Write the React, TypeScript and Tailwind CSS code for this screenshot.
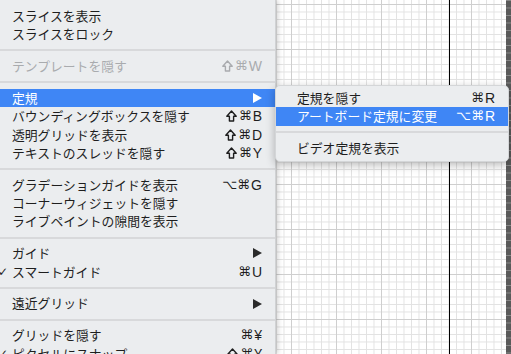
import React from "react";

type Item =
  | "sep"
  | { t: string; k?: string; sub?: boolean; active?: boolean; disabled?: boolean; checked?: boolean };

const menuItems: Item[] = [
  { t: "スライスを表示" },
  { t: "スライスをロック" },
  "sep",
  { t: "テンプレートを隠す", k: "⇧⌘W", disabled: true },
  "sep",
  { t: "定規", sub: true, active: true },
  { t: "バウンディングボックスを隠す", k: "⇧⌘B" },
  { t: "透明グリッドを表示", k: "⇧⌘D" },
  { t: "テキストのスレッドを隠す", k: "⇧⌘Y" },
  "sep",
  { t: "グラデーションガイドを表示", k: "⌥⌘G" },
  { t: "コーナーウィジェットを隠す" },
  { t: "ライブペイントの隙間を表示" },
  "sep",
  { t: "ガイド", sub: true },
  { t: "スマートガイド", k: "⌘U", checked: true },
  "sep",
  { t: "遠近グリッド", sub: true },
  "sep",
  { t: "グリッドを隠す", k: "⌘¥" },
  { t: "ピクセルにスナップ", k: "⇧⌘¥", checked: true },
];

const subItems: Item[] = [
  { t: "定規を隠す", k: "⌘R" },
  { t: "アートボード定規に変更", k: "⌥⌘R", active: true },
  "sep",
  { t: "ビデオ定規を表示" },
];

function Arrow({ active }: { active?: boolean }) {
  return (
    <svg width="9" height="10" viewBox="0 0 9 10" className="shrink-0">
      <path d="M0 0 L9 5 L0 10 Z" fill={active ? "#ffffff" : "#2a2a2a"} />
    </svg>
  );
}

// outlined shift arrow, the DejaVu glyph is too thin next to the mac one
function ShiftIcon() {
  return (
    <svg width="11" height="12" viewBox="0 0 11 12" className="shrink-0 mr-[2px]">
      <path
        d="M5.5 1 L10.2 6.2 H7.6 V11 H3.4 V6.2 H0.8 Z"
        fill="none"
        stroke="currentColor"
        strokeWidth="1.4"
        strokeLinejoin="round"
      />
    </svg>
  );
}

function Shortcut({ k }: { k: string }) {
  const mods = k.slice(0, -1);
  const key = k.slice(-1);
  return (
    <span className="flex items-center whitespace-nowrap leading-[18.4px]">
      {mods.split("").map((m, i) =>
        m === "⇧" ? (
          <ShiftIcon key={i} />
        ) : (
          <span key={i} className="text-[13px] font-['DejaVu_Sans',sans-serif]">
            {m}
          </span>
        )
      )}
      <span className="ml-[1px] text-[14px] font-['Liberation_Sans',sans-serif]">{key}</span>
    </span>
  );
}

function Row({ item, padL, padR }: { item: Exclude<Item, "sep">; padL: string; padR: string }) {
  const color = item.active ? "text-white" : item.disabled ? "text-[#a9abae]" : "text-[#1e1e1e]";
  return (
    <div
      className={`flex items-center h-[18.4px] ${padL} ${padR} ${item.active ? "bg-[#3f86f5]" : ""} ${color}`}
    >
      <span className="w-0 shrink-0 -translate-x-[14px] text-[12px] leading-none font-['DejaVu_Sans',sans-serif]">
        {item.checked ? "✓" : ""}
      </span>
      <span className="flex-1 whitespace-nowrap text-[12.8px] leading-[18.4px] font-['Noto_Sans_CJK_JP',sans-serif]">
        {item.t}
      </span>
      {item.k && <Shortcut k={item.k} />}
      {item.sub && <Arrow active={item.active} />}
    </div>
  );
}

function Separator() {
  return (
    <div className="h-[13.4px] flex items-center">
      <div className="h-[2px] w-full bg-[#d8d9db]" />
    </div>
  );
}

export default function App() {
  return (
    <div className="relative w-[511px] h-[354px] overflow-hidden flex bg-white">
      {/* main View menu */}
      <div className="relative z-10 w-[276px] shrink-0 bg-[#ebedef] pt-[6.8px] shadow-[2px_0_5px_rgba(0,0,0,0.18)] border-r border-[#d0d2d4]">
        {menuItems.map((it, i) =>
          it === "sep" ? (
            <Separator key={i} />
          ) : (
            <Row key={i} item={it} padL="pl-[12px]" padR="pr-[13px]" />
          )
        )}
      </div>

      {/* artboard grid canvas */}
      <div className="relative flex-1 flex">
        <div className="flex-1 bg-white bg-[linear-gradient(to_right,#cfcfcf_1px,transparent_1px),linear-gradient(to_bottom,#cfcfcf_1px,transparent_1px),linear-gradient(to_right,#e2e2e2_1px,transparent_1px),linear-gradient(to_bottom,#e2e2e2_1px,transparent_1px)] bg-[size:45px_45px,45px_45px,7.5px_7.5px,7.5px_7.5px] bg-[position:15px_4px,15px_4px,0_4px,0_4px]" />
        <div className="w-[5px] shrink-0 bg-[#5a5a5a] bg-[linear-gradient(to_bottom,#8a8a8a_1px,transparent_1px)] bg-[size:5px_7.5px]" />
        <div className="absolute top-0 bottom-0 left-[173px] w-[1px] bg-black" />
      </div>

      {/* 定規 submenu */}
      <div className="absolute z-20 left-[275px] top-[85px] w-[234px] rounded-[5px] bg-[#ebedef] py-[3px] shadow-[0_3px_10px_rgba(0,0,0,0.28)] border border-[#d4d6d8]">
        {subItems.map((it, i) =>
          it === "sep" ? (
            <Separator key={i} />
          ) : (
            <Row key={i} item={it} padL="pl-[21px]" padR="pr-[13px]" />
          )
        )}
      </div>
    </div>
  );
}
